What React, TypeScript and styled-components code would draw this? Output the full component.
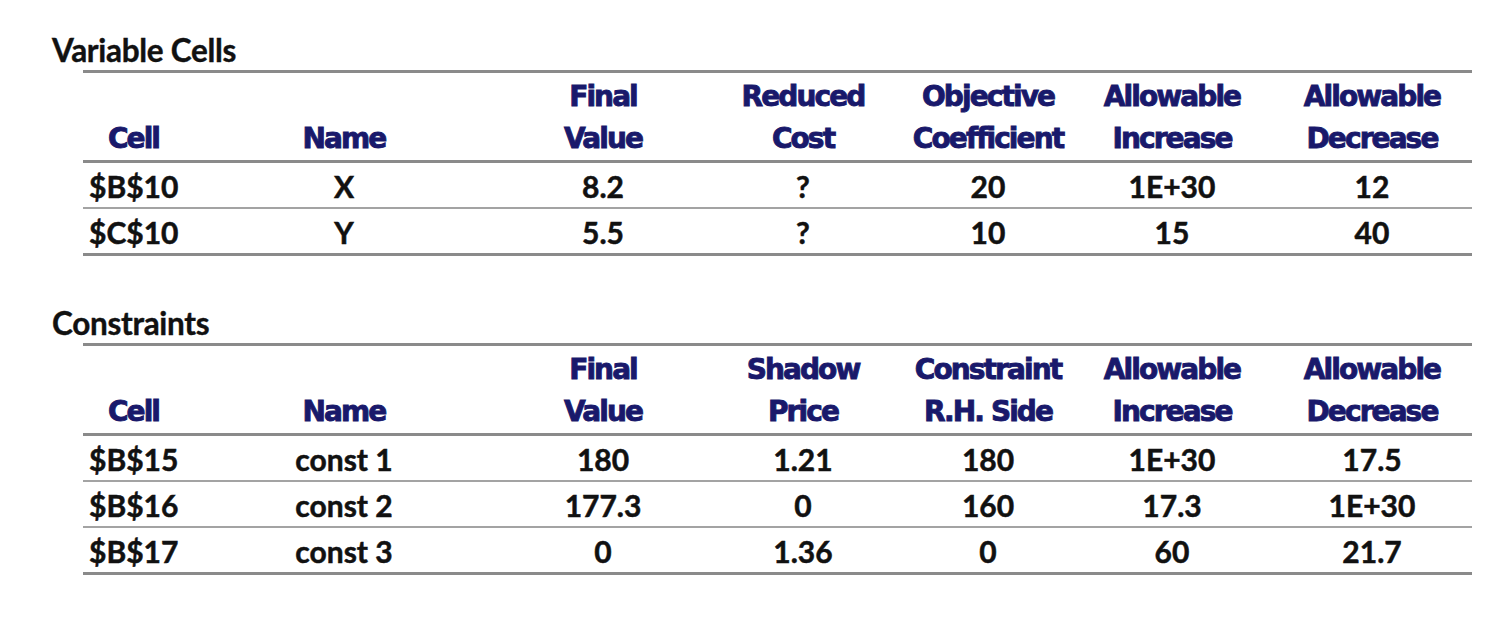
import React from "react";
import styled, { createGlobalStyle } from "styled-components";

const Global = createGlobalStyle`
  html, body { margin: 0; padding: 0; background: #ffffff; }
  body { font-family: "Lato", "Open Sans", sans-serif; }
`;

const Page = styled.div`
  width: 1510px;
  height: 638px;
  box-sizing: border-box;
  padding: 30px 0 0 52px;
  display: flex;
  flex-direction: column;
  gap: 47px;
`;

const Section = styled.section`
  display: flex;
  flex-direction: column;
`;

const Title = styled.h2`
  margin: 0;
  font-family: "Lato", "Open Sans", sans-serif;
  font-weight: 700;
  font-size: 31.5px;
  line-height: 40px;
  color: #111;
  letter-spacing: -0.3px;
  -webkit-text-stroke: 0.4px #111;
`;

const Table = styled.table`
  margin-left: 31px;
  width: 1389px;
  table-layout: fixed;
  border-collapse: separate;
  border-spacing: 0;
`;

const HeadCell = styled.th`
  box-sizing: border-box;
  height: 93px;
  padding: 3px 0 0;
  vertical-align: top;
  border-top: 3px solid #8a8a8a;
  border-bottom: 3px solid #8a8a8a;
  font-family: "DejaVu Sans", "Verdana", sans-serif;
  font-weight: 700;
  font-size: 28px;
  line-height: 42px;
  letter-spacing: -1.9px;
  color: #19196b;
  -webkit-text-stroke: 0.9px #19196b;
  text-align: center;
  white-space: pre-line;
`;

const Cell = styled.td<{ $first?: boolean; $last?: boolean }>`
  box-sizing: border-box;
  height: ${(p) => (p.$last ? 47 : 46)}px;
  padding: 2px 0 0 ${(p) => (p.$first ? "6px" : "0")};
  border-bottom: ${(p) => (p.$last ? "3px solid #8a8a8a" : "2px solid #a3a3a3")};
  font-family: "Lato", "Open Sans", sans-serif;
  font-weight: 700;
  font-size: 30px;
  line-height: 42px;
  color: #111;
  -webkit-text-stroke: 0.5px #111;
  text-align: ${(p) => (p.$first ? "left" : "center")};
  vertical-align: middle;
`;

const widths = [101, 320, 198, 202, 168, 200, 200];

type SectionData = {
  title: string;
  headers: string[];
  rows: string[][];
};

const sections: SectionData[] = [
  {
    title: "Variable Cells",
    headers: [
      "Cell",
      "Name",
      "Final\nValue",
      "Reduced\nCost",
      "Objective\nCoefficient",
      "Allowable\nIncrease",
      "Allowable\nDecrease",
    ],
    rows: [
      ["$B$10", "X", "8.2", "?", "20", "1E+30", "12"],
      ["$C$10", "Y", "5.5", "?", "10", "15", "40"],
    ],
  },
  {
    title: "Constraints",
    headers: [
      "Cell",
      "Name",
      "Final\nValue",
      "Shadow\nPrice",
      "Constraint\nR.H. Side",
      "Allowable\nIncrease",
      "Allowable\nDecrease",
    ],
    rows: [
      ["$B$15", "const 1", "180", "1.21", "180", "1E+30", "17.5"],
      ["$B$16", "const 2", "177.3", "0", "160", "17.3", "1E+30"],
      ["$B$17", "const 3", "0", "1.36", "0", "60", "21.7"],
    ],
  },
];

function Report({ data }: { data: SectionData }) {
  return (
    <Section>
      <Title>{data.title}</Title>
      <Table>
        <colgroup>
          {widths.map((w, i) => (
            <col key={i} style={{ width: w }} />
          ))}
        </colgroup>
        <thead>
          <tr>
            {data.headers.map((h, i) => (
              <HeadCell key={i}>{h.includes("\n") ? h : "\n" + h}</HeadCell>
            ))}
          </tr>
        </thead>
        <tbody>
          {data.rows.map((r, ri) => (
            <tr key={ri}>
              {r.map((c, ci) => (
                <Cell key={ci} $first={ci === 0} $last={ri === data.rows.length - 1}>
                  {c}
                </Cell>
              ))}
            </tr>
          ))}
        </tbody>
      </Table>
    </Section>
  );
}

export default function App() {
  return (
    <>
      <Global />
      <Page>
        {sections.map((s) => (
          <Report key={s.title} data={s} />
        ))}
      </Page>
    </>
  );
}
